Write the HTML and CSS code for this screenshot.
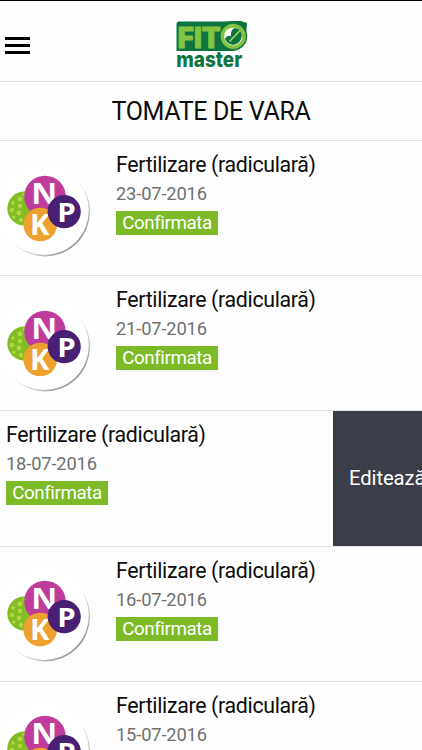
FILE: index.html
```
<!DOCTYPE html>
<html lang="ro">
<head>
<meta charset="utf-8">
<meta name="viewport" content="width=device-width">
<title>Fito Master</title>
<link rel="stylesheet" href="styles.css">
</head>
<body>
<svg width="0" height="0" class="defs">
  <defs>
    <linearGradient id="rim" x1="0.15" y1="0.15" x2="0.85" y2="0.85">
      <stop offset="0.35" stop-color="#fff"/>
      <stop offset="0.75" stop-color="#ccc"/>
      <stop offset="1" stop-color="#999"/>
    </linearGradient>
    <symbol id="npk" viewBox="0 0 92 92">
      <circle cx="45.2" cy="46.6" r="44.8" fill="url(#rim)"/>
      <circle cx="44.2" cy="45.4" r="44.6" fill="#fff"/>
      <circle cx="24.3" cy="43.5" r="17" fill="#83bd25"/>
      <g fill="#b0d941">
        <circle cx="20" cy="34" r="2.4"/><circle cx="13" cy="38" r="1.8"/><circle cx="20" cy="41" r="2.2"/>
        <circle cx="12" cy="45" r="2.3"/><circle cx="19" cy="48" r="2.4"/><circle cx="14" cy="52" r="1.6"/>
        <circle cx="21" cy="55" r="2.2"/><circle cx="24" cy="29.5" r="1.5"/>
      </g>
      <g class="npk-letters">
        <circle cx="45" cy="31.5" r="20.8" fill="#bf3c9c"/>
        <circle cx="40.2" cy="59.5" r="16.8" fill="#eda12e"/>
        <text x="31.2" y="38.6" font-size="28.5" textLength="26" lengthAdjust="spacingAndGlyphs">N</text>
        <text x="30" y="69.8" font-size="28" textLength="19.5" lengthAdjust="spacingAndGlyphs">K</text>
        <circle cx="64.2" cy="46.7" r="16.6" fill="#482073"/>
        <text x="57.2" y="56.6" font-size="27.5" textLength="18.5" lengthAdjust="spacingAndGlyphs">P</text>
      </g>
    </symbol>
  </defs>
</svg>

<header class="topbar">
  <button class="menu" aria-label="Meniu"><span></span><span></span><span></span></button>
  <svg class="logo" width="76" height="52" viewBox="0 0 76 52" role="img" aria-label="Fito Master">
    <path d="M6 2.5H50L60 2H68L74 4L73 17Q71 31 60 32H3.5V5Q3.5 2.5 6 2.5Z" fill="#0d7440"/>
    <text class="logo-fito" x="4.5" y="28.8" textLength="43" lengthAdjust="spacingAndGlyphs">FIT</text>
    <circle cx="60.2" cy="17.4" r="14" fill="#0d7440"/>
    <circle cx="60.2" cy="17.4" r="10.8" fill="#fff" stroke="#82c341" stroke-width="3.6"/>
    <path d="M52 20Q54 16 58 17Q57 11 62 9Q68 10 69 16Q68 25 60 26Q54 25 52 20Z" fill="#0d7440"/>
    <path d="M56.5 22.5L67.5 11" stroke="#a7d65c" stroke-width="1.6"/>
    <text class="logo-master" x="3.2" y="47.8" textLength="66" lengthAdjust="spacingAndGlyphs">master</text>
  </svg>
</header>

<h1 class="title"><span>TOMATE DE VARA</span></h1>

<main class="list">
  <article class="row">
    <svg class="icon"><use href="#npk"/></svg>
    <div class="info"><h2>Fertilizare (radiculară)</h2><time>23-07-2016</time><span class="badge">Confirmata</span></div>
  </article>
  <article class="row">
    <svg class="icon"><use href="#npk"/></svg>
    <div class="info"><h2>Fertilizare (radiculară)</h2><time>21-07-2016</time><span class="badge">Confirmata</span></div>
  </article>
  <article class="row swiped">
    <div class="info"><h2>Fertilizare (radiculară)</h2><time>18-07-2016</time><span class="badge">Confirmata</span></div>
    <button class="edit">Editează</button>
  </article>
  <article class="row">
    <svg class="icon"><use href="#npk"/></svg>
    <div class="info"><h2>Fertilizare (radiculară)</h2><time>16-07-2016</time><span class="badge">Confirmata</span></div>
  </article>
  <article class="row last">
    <svg class="icon"><use href="#npk"/></svg>
    <div class="info"><h2>Fertilizare (radiculară)</h2><time>15-07-2016</time></div>
  </article>
</main>
</body>
</html>
```
FILE: styles.css
```
* { box-sizing: border-box; }
body {
  margin: 0;
  height: 750px;
  overflow: hidden;
  display: flex;
  flex-direction: column;
  background: #fefefe;
  color: #0c0c0c;
  font-family: Roboto, sans-serif;
  border-top: 1.5px solid #000;
}
.defs { display: block; height: 0; flex: none; }
.topbar {
  flex: none;
  height: 81px;
  border-bottom: 1px solid #e2e2e2;
  display: grid;
  grid-template-columns: 1fr 76px 1fr;
  align-items: center;
}
.menu {
  display: flex;
  flex-direction: column;
  gap: 4px;
  width: 25px;
  margin: 9px 0 0 5px;
  padding: 0;
  border: 0;
  background: none;
}
.menu span { height: 3px; background: #000; }
.logo { display: block; margin-top: 7px; }
.logo-fito {
  font: 900 29px Roboto, sans-serif;
  fill: #82c341;
  stroke: #82c341;
  stroke-width: 1;
}
.logo-master {
  font: 800 22px Inter, sans-serif;
  fill: #0d7440;
}
.title {
  flex: none;
  margin: 0;
  height: 59px;
  border-bottom: 1.5px solid #e2e2e2;
  font-size: 25px;
  font-weight: 400;
  line-height: 59px;
  letter-spacing: -0.33px;
  text-align: center;
}
.list {
  flex: 1;
  min-height: 0;
  overflow: hidden;
}
.row {
  display: flex;
  height: 135.2px;
  border-bottom: 1.5px solid #e2e2e2;
  overflow: hidden;
}
.row.last { height: 68px; border-bottom: 0; }
.icon {
  flex: none;
  width: 92px;
  height: 92px;
  margin: 23.5px 24px 0 0;
}
.npk-letters {
  font-family: "Open Sans", sans-serif;
  font-weight: 700;
}
.npk-letters text { fill: #fff; }
.info {
  flex: 1;
  display: flex;
  flex-direction: column;
  align-items: flex-start;
  padding-top: 10px;
}
.info h2 {
  margin: 0;
  font-size: 21.3px;
  font-weight: 400;
  line-height: 28px;
  letter-spacing: -0.31px;
  white-space: nowrap;
}
.info time {
  font-size: 18.3px;
  line-height: 30px;
  letter-spacing: -0.15px;
  color: #707070;
}
.badge {
  width: 102px;
  height: 24px;
  margin-top: 2px;
  background: #7cbb27;
  color: #fff;
  font-size: 18.8px;
  line-height: 24px;
  letter-spacing: -0.45px;
  text-align: center;
}
.swiped .info { padding-left: 6px; }
.edit {
  flex: none;
  width: 89px;
  padding: 0 0 0 16px;
  border: 0;
  background: #3b3d48;
  color: #fff;
  font: 400 20.3px Roboto, sans-serif;
  letter-spacing: -0.1px;
  text-align: left;
  white-space: nowrap;
  overflow: hidden;
}
```
